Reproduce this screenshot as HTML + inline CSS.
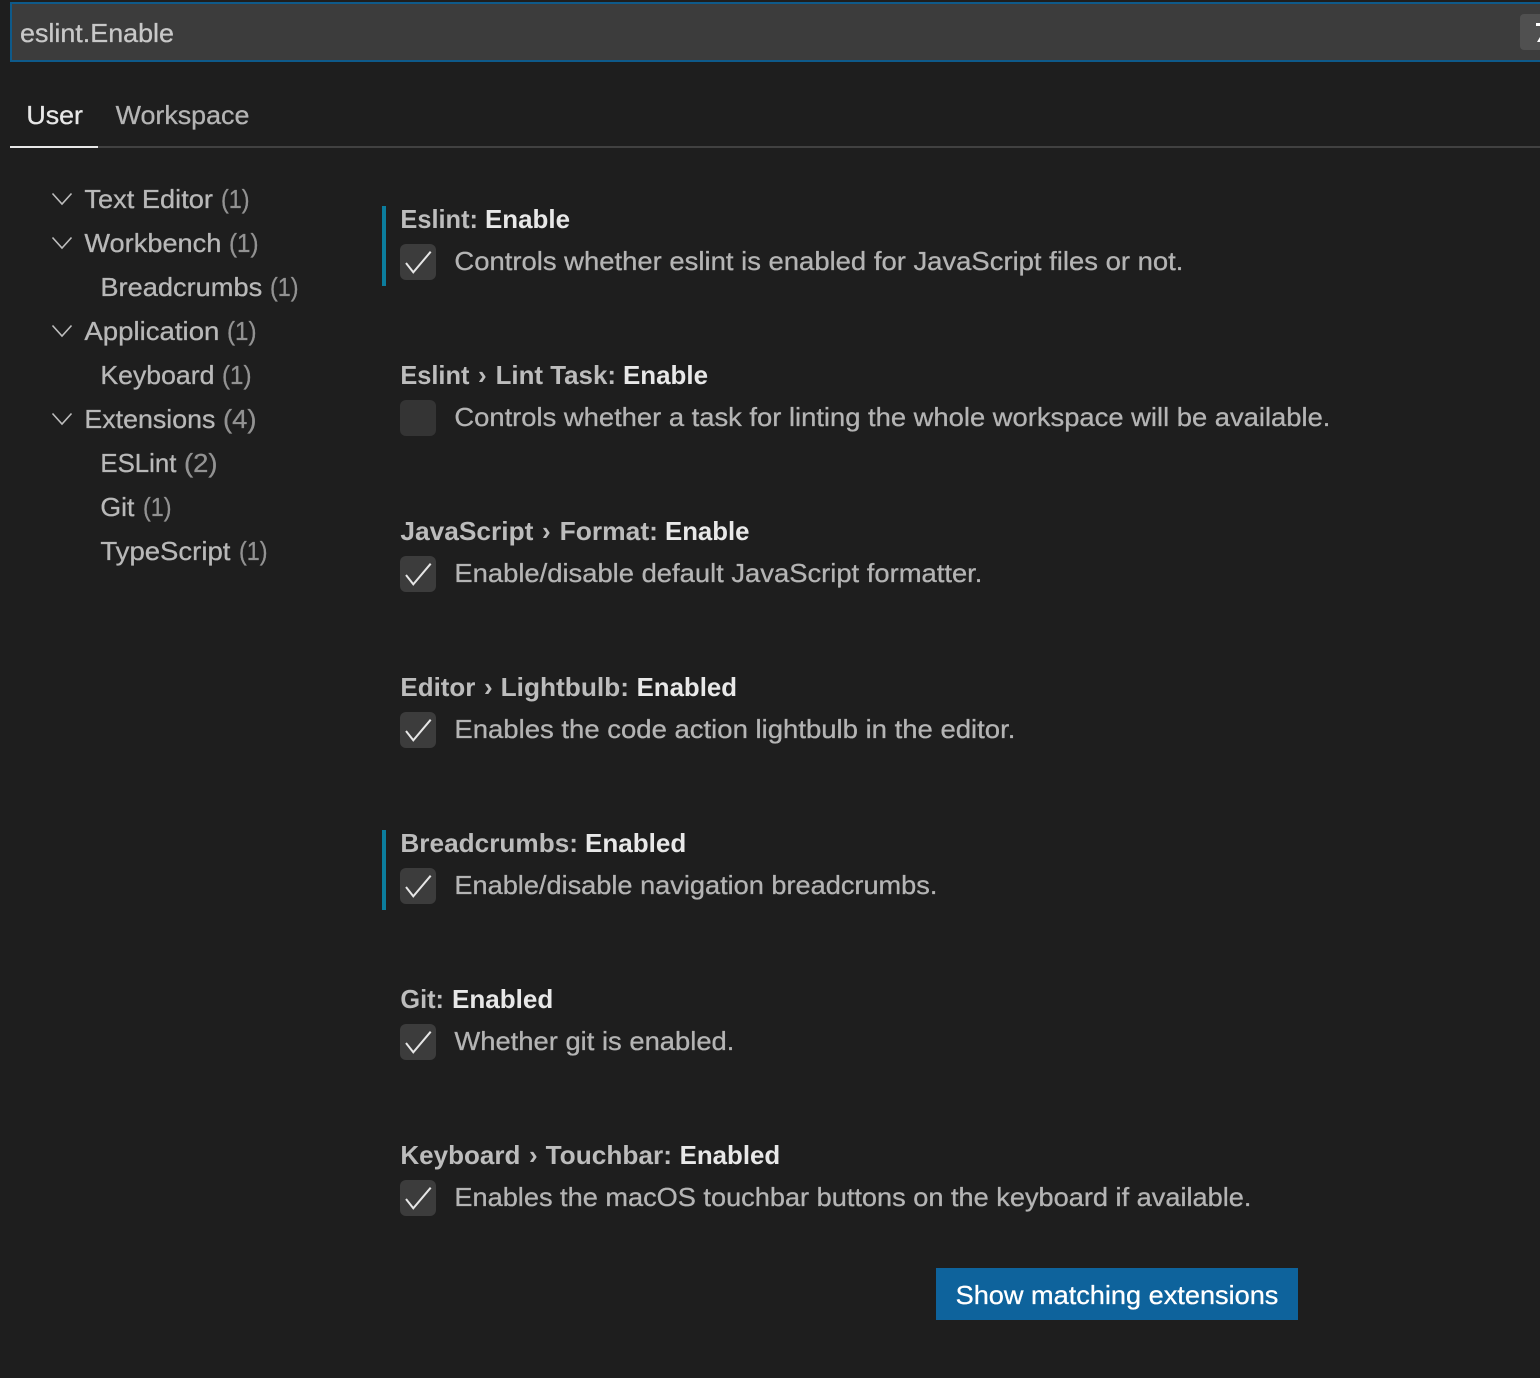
<!DOCTYPE html>
<html><head><meta charset="utf-8"><style>
html,body{margin:0;padding:0;background:#1e1e1e;width:1540px;height:1378px;overflow:hidden}
svg{display:block;font-family:"Liberation Sans",sans-serif;font-size:26px;stroke-width:.3px}
.t{fill:#b8b8b8;stroke:#b8b8b8}.d{fill:#929292;stroke:#929292}.l{fill:#bcbcbc;font-weight:600}.b{fill:#e8e8e8;font-weight:600}.s{fill:#b4b4b4;stroke:#b4b4b4}
.box{fill:#3c3c3c}.ck{fill:none;stroke:#e6e6e6;stroke-width:2}.ch{fill:none;stroke:#bdbdbd;stroke-width:1.6}
</style></head><body>
<svg width="1540" height="1378" viewBox="0 0 1540 1378" xmlns="http://www.w3.org/2000/svg">
<rect width="1540" height="1378" fill="#1e1e1e"/>
<rect x="11" y="3" width="1540" height="58" fill="#3c3c3c" stroke="#0e5a8a" stroke-width="2"/>
<rect x="1520" y="14" width="40" height="36" rx="4" fill="#505050"/>
<rect x="1536" y="23" width="6" height="3" fill="#fff"/>
<path d="M1537 42l3-5v5z" fill="#fff"/>
<text x="20" y="42" fill="#c8c8c8" stroke="#c8c8c8" textLength="154" lengthAdjust="spacingAndGlyphs">eslint.Enable</text>

<text x="26.400" y="124" fill="#e7e7e7" stroke="#e7e7e7" textLength="56.600" lengthAdjust="spacingAndGlyphs">User</text>
<text x="115.600" y="124" fill="#b4b4b4" stroke="#b4b4b4" textLength="133.800" lengthAdjust="spacingAndGlyphs">Workspace</text>
<rect x="10" y="146" width="1530" height="2" fill="#414141"/>
<rect x="10" y="146" width="88" height="2" fill="#e7e7e7"/>

<path class="ch" d="M52.500 193.500L62 204L71.500 193.500"/>
<path class="ch" d="M52.500 237.500L62 248L71.500 237.500"/>
<path class="ch" d="M52.500 325.500L62 336L71.500 325.500"/>
<path class="ch" d="M52.500 413.500L62 424L71.500 413.500"/>

<text class="t" x="84.400" y="208" textLength="128.600" lengthAdjust="spacingAndGlyphs">Text Editor</text><text class="d" x="221" y="208" textLength="28.500" lengthAdjust="spacingAndGlyphs">(1)</text>
<text class="t" x="84.400" y="252" textLength="137" lengthAdjust="spacingAndGlyphs">Workbench</text><text class="d" x="229" y="252" textLength="29.500" lengthAdjust="spacingAndGlyphs">(1)</text>
<text class="t" x="100.400" y="296" textLength="161.800" lengthAdjust="spacingAndGlyphs">Breadcrumbs</text><text class="d" x="270" y="296" textLength="28.500" lengthAdjust="spacingAndGlyphs">(1)</text>
<text class="t" x="84.400" y="340" textLength="135" lengthAdjust="spacingAndGlyphs">Application</text><text class="d" x="227" y="340" textLength="29.500" lengthAdjust="spacingAndGlyphs">(1)</text>
<text class="t" x="100.400" y="384" textLength="114" lengthAdjust="spacingAndGlyphs">Keyboard</text><text class="d" x="222" y="384" textLength="29.500" lengthAdjust="spacingAndGlyphs">(1)</text>
<text class="t" x="84.400" y="428" textLength="131" lengthAdjust="spacingAndGlyphs">Extensions</text><text class="d" x="223" y="428" textLength="33.500" lengthAdjust="spacingAndGlyphs">(4)</text>
<text class="t" x="100.400" y="472" textLength="76" lengthAdjust="spacingAndGlyphs">ESLint</text><text class="d" x="184" y="472" textLength="33.500" lengthAdjust="spacingAndGlyphs">(2)</text>
<text class="t" x="100.400" y="516" textLength="34" lengthAdjust="spacingAndGlyphs">Git</text><text class="d" x="143" y="516" textLength="28.500" lengthAdjust="spacingAndGlyphs">(1)</text>
<text class="t" x="100.400" y="560" textLength="130" lengthAdjust="spacingAndGlyphs">TypeScript</text><text class="d" x="239" y="560" textLength="28.500" lengthAdjust="spacingAndGlyphs">(1)</text>

<rect x="382" y="206" width="4" height="80" fill="#0c7d9d"/>
<rect x="382" y="830" width="4" height="80" fill="#0c7d9d"/>

<text class="l" x="400.400" y="228" textLength="77.600" lengthAdjust="spacingAndGlyphs">Eslint:</text><text class="b" x="485" y="228" textLength="85" lengthAdjust="spacingAndGlyphs">Enable</text>
<rect class="box" x="400" y="244" width="36" height="36" rx="6"/><path class="ck" d="M406 263L413.300 272.300L430.700 251.700"/>
<text class="s" x="454.400" y="270" textLength="729" lengthAdjust="spacingAndGlyphs">Controls whether eslint is enabled for JavaScript files or not.</text>

<text class="l" x="400.400" y="384" textLength="69" lengthAdjust="spacingAndGlyphs">Eslint</text><text class="l" x="478" y="384">›</text><text class="l" x="495.600" y="384" textLength="120.400" lengthAdjust="spacingAndGlyphs">Lint Task:</text><text class="b" x="623" y="384" textLength="85" lengthAdjust="spacingAndGlyphs">Enable</text>
<rect x="400" y="400" width="36" height="36" rx="6" fill="#343434"/>
<text class="s" x="454.400" y="426" textLength="876" lengthAdjust="spacingAndGlyphs">Controls whether a task for linting the whole workspace will be available.</text>

<text class="l" x="400.400" y="540" textLength="133" lengthAdjust="spacingAndGlyphs">JavaScript</text><text class="l" x="542" y="540">›</text><text class="l" x="559.600" y="540" textLength="98.400" lengthAdjust="spacingAndGlyphs">Format:</text><text class="b" x="665" y="540" textLength="84.500" lengthAdjust="spacingAndGlyphs">Enable</text>
<rect class="box" x="400" y="556" width="36" height="36" rx="6"/><path class="ck" d="M406 575L413.300 584.300L430.700 563.700"/>
<text class="s" x="454.400" y="582" textLength="528" lengthAdjust="spacingAndGlyphs">Enable/disable default JavaScript formatter.</text>

<text class="l" x="400.400" y="696" textLength="75" lengthAdjust="spacingAndGlyphs">Editor</text><text class="l" x="484" y="696">›</text><text class="l" x="500.600" y="696" textLength="128.400" lengthAdjust="spacingAndGlyphs">Lightbulb:</text><text class="b" x="636.600" y="696" textLength="100.400" lengthAdjust="spacingAndGlyphs">Enabled</text>
<rect class="box" x="400" y="712" width="36" height="36" rx="6"/><path class="ck" d="M406 731L413.300 740.300L430.700 719.700"/>
<text class="s" x="454.400" y="738" textLength="561" lengthAdjust="spacingAndGlyphs">Enables the code action lightbulb in the editor.</text>

<text class="l" x="400.400" y="852" textLength="177.600" lengthAdjust="spacingAndGlyphs">Breadcrumbs:</text><text class="b" x="585" y="852" textLength="101.300" lengthAdjust="spacingAndGlyphs">Enabled</text>
<rect class="box" x="400" y="868" width="36" height="36" rx="6"/><path class="ck" d="M406 887L413.300 896.300L430.700 875.700"/>
<text class="s" x="454.400" y="894" textLength="483" lengthAdjust="spacingAndGlyphs">Enable/disable navigation breadcrumbs.</text>

<text class="l" x="400.400" y="1008" textLength="43.600" lengthAdjust="spacingAndGlyphs">Git:</text><text class="b" x="452" y="1008" textLength="101.300" lengthAdjust="spacingAndGlyphs">Enabled</text>
<rect class="box" x="400" y="1024" width="36" height="36" rx="6"/><path class="ck" d="M406 1043L413.300 1052.300L430.700 1031.700"/>
<text class="s" x="454.400" y="1050" textLength="280" lengthAdjust="spacingAndGlyphs">Whether git is enabled.</text>

<text class="l" x="400.400" y="1164" textLength="120" lengthAdjust="spacingAndGlyphs">Keyboard</text><text class="l" x="529" y="1164">›</text><text class="l" x="545.600" y="1164" textLength="126.400" lengthAdjust="spacingAndGlyphs">Touchbar:</text><text class="b" x="679.600" y="1164" textLength="100.600" lengthAdjust="spacingAndGlyphs">Enabled</text>
<rect class="box" x="400" y="1180" width="36" height="36" rx="6"/><path class="ck" d="M406 1199L413.300 1208.300L430.700 1187.700"/>
<text class="s" x="454.400" y="1206" textLength="797" lengthAdjust="spacingAndGlyphs">Enables the macOS touchbar buttons on the keyboard if available.</text>

<rect x="936" y="1268" width="362" height="52" fill="#0e639c"/>
<text x="955.600" y="1304" fill="#ffffff" stroke="#ffffff" textLength="322.800" lengthAdjust="spacingAndGlyphs">Show matching extensions</text>
</svg>
</body></html>
